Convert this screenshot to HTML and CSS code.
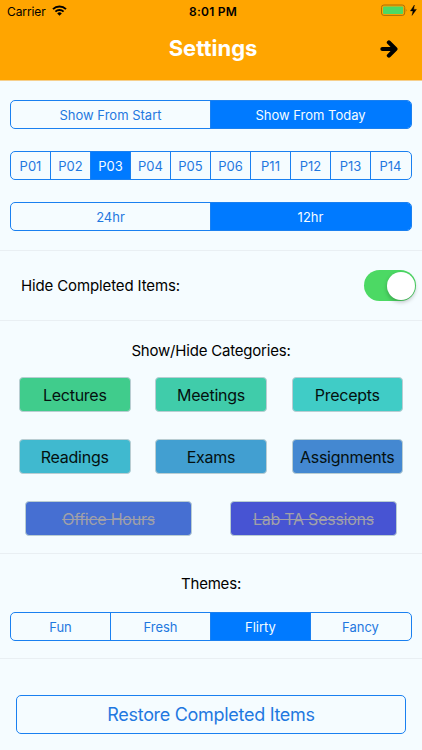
FILE: index.html
```
<!DOCTYPE html>
<html lang="en">
<head>
    <meta charset="UTF-8">
    <meta name="viewport" content="width=device-width, initial-scale=1.0">
    <title>Settings</title>
    <link rel="stylesheet" href="styles.css">
</head>
<body>
    <header>
        <div class="status">
            <div class="carrier">
                <span>Carrier</span>
                <svg class="wifi" width="15" height="11" viewBox="0 0 15 11">
                    <path d="M1 4.1 A9.3 9.3 0 0 1 14 4.1" fill="none" stroke="#000" stroke-width="2"/>
                    <path d="M3.4 6.6 A5.9 5.9 0 0 1 11.6 6.6" fill="none" stroke="#000" stroke-width="1.9"/>
                    <path d="M5.2 8.4 A3.3 3.3 0 0 1 9.8 8.4 L7.5 10.8 Z" fill="#000"/>
                </svg>
            </div>
            <span class="clock">8:01 PM</span>
            <div class="power">
                <svg width="36" height="13" viewBox="0 0 36 13">
                    <rect x="0.5" y="1" width="23.2" height="10.4" rx="2.4" fill="none" stroke="#a87008" stroke-width="1"/>
                    <rect x="2" y="2.5" width="20.2" height="7.4" rx="1" fill="#4cd964"/>
                    <path d="M24.8 4.4 q1.5 1.8 0 3.6 z" fill="#a87008"/>
                    <path d="M33.4 1 L29.4 6.9 L32 6.9 L31 11.4 L35.4 5.4 L32.6 5.4 Z" fill="#000" stroke="#000" stroke-width="0.4"/>
                </svg>
            </div>
        </div>
        <div class="navbar">
            <h1>Settings</h1>
            <a class="next" href="#" aria-label="Next">
                <svg width="18" height="18" viewBox="0 0 18 18">
                    <path d="M2.4 9 H14 M8.9 2.4 L15.4 9 L8.9 15.6" fill="none" stroke="#000" stroke-width="4.2" stroke-linecap="round" stroke-linejoin="round"/>
                </svg>
            </a>
        </div>
    </header>

    <section class="filters">
        <div class="segment">
            <button>Show From Start</button>
            <button class="active">Show From Today</button>
        </div>
        <div class="segment">
            <button>P01</button>
            <button>P02</button>
            <button class="active">P03</button>
            <button>P04</button>
            <button>P05</button>
            <button>P06</button>
            <button>P11</button>
            <button>P12</button>
            <button>P13</button>
            <button>P14</button>
        </div>
        <div class="segment">
            <button>24hr</button>
            <button class="active">12hr</button>
        </div>
    </section>

    <section class="hide-items">
        <span class="label">Hide Completed Items:</span>
        <span class="switch"><span class="knob"></span></span>
    </section>

    <section class="categories">
        <p class="label">Show/Hide Categories:</p>
        <div class="row">
            <button class="category lectures">Lectures</button>
            <button class="category meetings">Meetings</button>
            <button class="category precepts">Precepts</button>
        </div>
        <div class="row">
            <button class="category readings">Readings</button>
            <button class="category exams">Exams</button>
            <button class="category assignments">Assignments</button>
        </div>
        <div class="row wide">
            <button class="category office off">Office Hours</button>
            <button class="category lab off">Lab TA Sessions</button>
        </div>
    </section>

    <section class="themes">
        <p class="label">Themes:</p>
        <div class="segment">
            <button>Fun</button>
            <button>Fresh</button>
            <button class="active">Flirty</button>
            <button>Fancy</button>
        </div>
    </section>

    <section class="restore">
        <button class="restore-btn">Restore Completed Items</button>
    </section>
</body>
</html>
```
FILE: styles.css
```
* {
    box-sizing: border-box;
}

body {
    margin: 0;
    font-family: Inter, "Liberation Sans", sans-serif;
    background-color: #f5fcff;
    color: #000;
}

button {
    margin: 0;
    padding: 0;
    border: none;
    background: none;
    font-family: inherit;
    white-space: nowrap;
}

header {
    height: 81px;
    background-color: #ffa500;
    border-bottom: 1px solid #f6cf8c;
}

.status {
    display: grid;
    grid-template-columns: 1fr auto 1fr;
    align-items: center;
    height: 22px;
    padding: 0 5px 0 7px;
    font-size: 12px;
}

.carrier {
    display: flex;
    align-items: center;
    gap: 6px;
    letter-spacing: -0.1px;
}

.wifi {
    position: relative;
    top: -1px;
}

.clock {
    margin-left: 2px;
    font-weight: 600;
    letter-spacing: 0.25px;
}

.power {
    display: flex;
    justify-content: flex-end;
}

.power svg {
    margin-bottom: 1px;
}

.navbar {
    display: grid;
    grid-template-columns: 1fr auto 1fr;
    align-items: center;
    height: 54px;
    padding: 0 24px;
}

h1 {
    grid-column: 2;
    margin: 0 0 2px 4px;
    font-size: 22px;
    font-weight: 700;
    color: #fff;
}

.next {
    display: flex;
    justify-content: flex-end;
}

section {
    border-bottom: 1px solid #e9eff3;
}

.filters {
    display: flex;
    flex-direction: column;
    gap: 22px;
    height: 170px;
    padding: 19px 10px 0;
}

.segment {
    display: flex;
    height: 29px;
    border: 1px solid #1a80f0;
    border-radius: 5px;
    overflow: hidden;
}

.segment button {
    flex: 1 1 0;
    min-width: 0;
    border-right: 1px solid #1a80f0;
    font-size: 13px;
    color: #1f78e0;
}

.segment button:last-child {
    border-right-color: transparent;
}

.segment .active {
    background-color: #007aff;
    color: #f5fcff;
}

.hide-items {
    display: flex;
    align-items: center;
    justify-content: space-between;
    height: 70px;
    padding: 0 6px 0 21px;
}

.label {
    margin: 0;
    font-size: 15px;
    line-height: 20px;
    letter-spacing: -0.2px;
}

.hide-items .label {
    letter-spacing: -0.13px;
}

.switch {
    display: flex;
    justify-content: flex-end;
    width: 52px;
    height: 31px;
    padding: 1.5px;
    border-radius: 16px;
    background-color: #4cd964;
}

.knob {
    width: 28px;
    height: 28px;
    border-radius: 50%;
    background-color: #fff;
    box-shadow: 0 2px 4px rgba(0, 0, 0, 0.25);
}

.categories {
    height: 233px;
    padding-top: 20px;
    text-align: center;
}

.row {
    display: flex;
    justify-content: space-between;
    margin-bottom: 27px;
    padding: 0 19px;
}

.categories .label {
    margin-bottom: 16px;
}

.row.wide {
    padding: 0 25px;
}

.category {
    width: 111.5px;
    height: 35px;
    border: 1px solid #b9cdd2;
    border-radius: 4px;
    font-size: 16px;
    letter-spacing: -0.25px;
    color: #04100f;
}

.wide .category {
    width: 167px;
}

.lectures {
    background-color: #40cc8c;
}

.meetings {
    background-color: #40ccaa;
}

.precepts {
    background-color: #40ccc6;
}

.readings {
    background-color: #40b9cf;
}

.exams {
    background-color: #429fd1;
}

.assignments {
    background-color: #4488d1;
}

.office {
    background-color: #466fd2;
}

.lab {
    background-color: #4754d3;
}

.wide .off {
    color: #a0a0a8;
    text-decoration: line-through;
}

.themes {
    height: 105px;
    padding: 20px 10px 0;
    text-align: center;
}

.themes .label {
    margin-bottom: 18px;
}

.restore {
    padding: 36px 16px 0;
    border-bottom: none;
}

.restore-btn {
    width: 390px;
    height: 39px;
    border: 1px solid #1a80f0;
    border-radius: 5px;
    font-size: 18px;
    letter-spacing: -0.3px;
    color: #1f78e0;
}
```
